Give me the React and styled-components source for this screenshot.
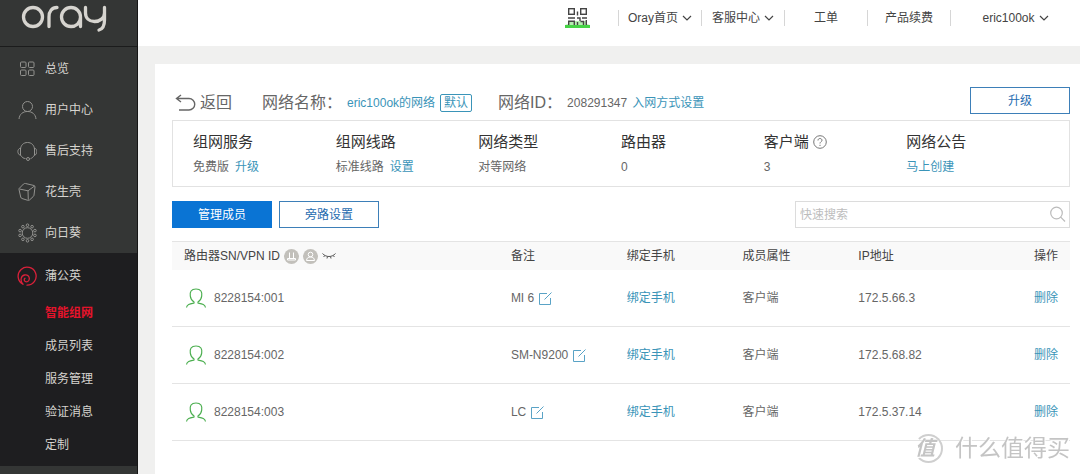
import React from "react";
import styled, { createGlobalStyle } from "styled-components";

const GlobalStyle = createGlobalStyle`
  *, *::before, *::after { box-sizing: border-box; }
  body {
    margin: 0;
    background: #f0f0ef;
    color: #666;
    font: 12px/20px "Liberation Sans", "Noto Sans CJK SC", sans-serif;
  }
  a { text-decoration: none; color: inherit; }
  ul, dl, dd, h1, h2 { margin: 0; padding: 0; list-style: none; font-weight: 400; }
  button, input { font: inherit; }
  svg { display: block; flex: none; fill: none; stroke: currentColor; }
`;

const Page = styled.div`
  display: flex;
  min-height: 100vh;
`;

const Sidebar = styled.aside`
  flex: 0 0 138px;
  background: #343635;
  border-right: 1px solid #161616;
  color: #d6d4cf;
`;

const Logo = styled.a`
  display: block;
  height: 47px;
  padding: 4px 0 0 20px;
  border-bottom: 1px solid #1b1c1c;
  margin-bottom: 1px;
`;

const NavLink = styled.a`
  display: flex;
  align-items: center;
  gap: 8px;
  height: 41px;
  padding-left: 17px;
  svg { color: ${(p) => (p.$active ? "#d9213a" : "#92928f")}; }
`;

const OpenGroup = styled.li`
  padding: 2px 0 4px;
  background: #1e1e20;
`;

const SubMenu = styled.ul`
  && { padding-top: 1px; }
`;

const SubLink = styled.a`
  display: block;
  padding-left: 45px;
  line-height: 33px;
  color: ${(p) => (p.$active ? "#e5132b" : "#d6d4cf")};
  font-weight: ${(p) => (p.$active ? 700 : 400)};
`;

const Column = styled.div`
  flex: 1;
  min-width: 0;
  display: flex;
  flex-direction: column;
`;

const TopBar = styled.header`
  display: flex;
  justify-content: flex-end;
  align-items: flex-start;
  gap: 28px;
  height: 46px;
  padding-top: 8px;
  background: #fff;
  color: #444;
`;

const TopNav = styled.nav`
  display: flex;
  padding-top: 2px;
`;

const TopLink = styled.a`
  display: flex;
  align-items: center;
  justify-content: center;
  gap: 4px;
  width: ${(p) => (p.$wide ? 130 : 83)}px;
  height: 16px;
  border-left: 1px solid #d6d6d6;
`;

const Panel = styled.main`
  flex: 1;
  margin: 18px 0 0 17px;
  padding: 23px 10px 32px 17px;
  background: #fff;
`;

const TitleRow = styled.div`
  display: flex;
  justify-content: space-between;
  align-items: center;
  margin-bottom: 6px;
`;

const TitleGroup = styled.div`
  display: flex;
  align-items: center;
  padding: 4px 0 0 3px;
  line-height: 22px;
`;

const BackLink = styled.a`
  display: flex;
  align-items: center;
  gap: 3px;
  margin-right: 30px;
  font-size: 16px;
`;

const Fact = styled.div`
  display: flex;
  align-items: center;
  gap: 5px;
  margin-right: 26px;
`;

const FactLabel = styled.h1`
  font-size: 16px;
  white-space: nowrap;
`;

const Link = styled.a`
  color: #3a94b8;
`;

const Badge = styled.span`
  padding: 0 3px;
  border: 1px solid #3a94b8;
  border-radius: 2px;
  color: #3a94b8;
  line-height: 16px;
`;

const Button = styled.button`
  width: 100px;
  height: 27px;
  padding: 0;
  border: 1px solid ${(p) => (p.$primary ? "#0a74d4" : "#3d7fb8")};
  background: ${(p) => (p.$primary ? "#0a74d4" : "#fff")};
  color: ${(p) => (p.$primary ? "#fff" : "#1f6cb0")};
`;

const InfoBox = styled.dl`
  display: grid;
  grid-template-columns: repeat(6, 1fr);
  padding: 9px 20px;
  border: 1px solid #e2e2e2;
`;

const InfoName = styled.dt`
  display: flex;
  align-items: center;
  gap: 4px;
  color: #333;
  font-size: 15px;
  line-height: 24px;
`;

const InfoValue = styled.dd`
  display: flex;
  gap: 6px;
  && { padding-top: 3px; }
`;

const Toolbar = styled.div`
  display: flex;
  align-items: center;
  gap: 7px;
  margin: 14px 0 13px;
`;

const SearchBox = styled.label`
  display: flex;
  align-items: center;
  width: 275px;
  height: 27px;
  margin-left: auto;
  padding: 0 3px 0 4px;
  border: 1px solid #dcdcdc;
  color: #bbb;
`;

const SearchInput = styled.input`
  flex: 1;
  min-width: 0;
  padding: 0;
  border: 0;
  outline: 0;
  background: none;
  color: #666;
  &::placeholder { color: #bdbdbd; opacity: 1; }
`;

const Table = styled.table`
  width: 100%;
  table-layout: fixed;
  border-collapse: separate;
  border-spacing: 0;
  border-top: 1px solid #e4e4e4;
`;

const Col = styled.col`
  width: ${(p) => p.$w};
`;

const Th = styled.th`
  height: 28px;
  padding: 0 12px;
  background: #f9f9f9;
  color: #444;
  font-weight: 400;
  text-align: ${(p) => (p.$end ? "right" : "left")};
`;

const Td = styled.td`
  height: 57px;
  padding: 0 12px;
  border-bottom: 1px solid #e4e4e4;
  text-align: ${(p) => (p.$end ? "right" : "left")};
`;

const Inline = styled.div`
  display: flex;
  align-items: center;
  gap: ${(p) => p.$gap}px;
`;

const Watermark = styled.div`
  position: fixed;
  right: 10px;
  bottom: 10px;
  display: flex;
  align-items: center;
  gap: 12px;
  color: #c4c4c4;
  font-size: 23px;
  line-height: 32px;
  text-shadow: 0 0 1px #fff, 1px 1px 0 #fff;
  pointer-events: none;
`;

const Seal = styled.span`
  width: 29px;
  height: 29px;
  border: 2px solid #cfcfcf;
  border-left-color: transparent;
  border-radius: 50%;
  font-size: 20px;
  font-style: italic;
  font-weight: 700;
  line-height: 24px;
  text-indent: -1px;
`;

const OrayLogo = () => (
  <svg width="88" height="29" viewBox="20 4 88 29" strokeWidth="3.300" strokeLinecap="round" strokeLinejoin="round">
    <circle cx="33" cy="17" r="9.500" />
    <path d="M49 26.500V17c0-6 3-9.500 8-9.500" />
    <path d="M80.500 26.500V17a9.500 9.500 0 1 0-9.500 9.500c4.500 0 9.500-3 9.500-9.500" />
    <path d="M85.500 7.500V13c0 5 3.500 8.500 9 8.500S104.500 18 104.500 13V7.500V20c0 6-1.500 9-5.500 10" />
  </svg>
);

const iconProps = { width: 20, height: 20, viewBox: "0 0 20 20", strokeWidth: 1 };

const petals = Array.from({ length: 10 }, (_, i) => {
  const a = ((i + 0.5) * Math.PI) / 5;
  return [10.5 + 7.8 * Math.cos(a), 10 + 7.8 * Math.sin(a)];
});

const icons = {
  grid: (
    <svg {...iconProps}>
      <rect x="3.500" y="3" width="5.500" height="5.500" rx="1" />
      <rect x="11.500" y="3" width="5.500" height="5.500" rx="1" />
      <rect x="3.500" y="11" width="5.500" height="5.500" rx="1" />
      <rect x="11.500" y="11" width="5.500" height="5.500" rx="1" />
    </svg>
  ),
  user: (
    <svg {...iconProps}>
      <circle cx="10.500" cy="6.500" r="5" />
      <path d="M2 19c.5-5 4-7.500 8.500-7.500S18.500 14 19 19" />
    </svg>
  ),
  headset: (
    <svg {...iconProps}>
      <path d="M3.500 8C4 4 6.500 1.500 10.500 1.500S17 4 17.500 8M3.500 7C0 8 0 13 3.500 14.500zM17.500 7c3 1 3 6 0 7.500zM4 14.500c1 2 2.500 3 4.500 3M17 14.500c-1 2-2 2.500-3.500 3.200" />
      <circle cx="11" cy="18" r="1.500" />
    </svg>
  ),
  cube: (
    <svg {...iconProps} strokeLinejoin="round">
      <path d="M8.500 1.500l8.500 2q1 .3 1 1.500l-1 8q0 1-.8 1.600L12.500 18q-.8.600-1.800.300L5 16.500q-1-.3-1.300-1.500L2 7.500Q1.800 6.500 2.600 6L6.500 2Q7.500 1.200 8.500 1.500zM2.500 7l8.500 1.800L17.500 4M11 8.800l.3 9" />
    </svg>
  ),
  sunflower: (
    <svg {...iconProps}>
      <circle cx="10.500" cy="10" r="5.300" />
      {petals.map(([x, y], i) => <circle key={i} cx={x} cy={y} r="1.300" />)}
    </svg>
  ),
  dandelion: (
    <svg {...iconProps} strokeWidth="1.300" strokeLinecap="round">
      <path d="M6 18.200A9 9 0 1 1 10 19.200M6 18.200C3 15 3.500 10 7.500 9c3-.600 5 1.500 4.800 4-.2 2.300-2.500 3.500-4.300 2.300-1-.8-1-2.300 0-3" />
    </svg>
  ),
};

const Chevron = () => (
  <svg width="10" height="8" viewBox="0 0 10 8" strokeWidth="1.200"><path d="M1 2l4 4 4-4" /></svg>
);

const QrIcon = () => (
  <svg width="25" height="20" viewBox="0 0 25 20">
    <path d="M0 17l3-1v-3h19v3l3 1v3H0z" fill="#b5ecb0" stroke="none" />
    <path d="M0 17h25v3H0z" fill="#45d245" stroke="none" />
    <g stroke="#444" strokeWidth="1.400">
      <rect x="3.700" y=".7" width="5.600" height="5.600" />
      <rect x="15.700" y=".7" width="5.600" height="5.600" />
      <path d="M12.500 3.500v4M3 10h7M12 10h3v3M17 10h5M3.700 17v-3.800h5.600V17M12.500 14v3M15.500 13.500h3V17M21.300 12v5" />
    </g>
  </svg>
);

const BackArrow = () => (
  <svg width="22" height="18" viewBox="0 0 22 18" strokeWidth="1.400">
    <path d="M6 1L1.500 4.500 6 8M1.500 4.500H14a5.500 5.500 0 0 1 0 11.500H4" />
  </svg>
);

const HelpIcon = () => (
  <svg width="14" height="14" viewBox="0 0 14 14" color="#777">
    <circle cx="7" cy="7" r="6.300" />
    <path d="M5 5.500C5 4.200 5.800 3.500 7 3.500s2 .8 2 1.800C9 6.700 7 6.700 7 8.500M7 9.800v1.200" />
  </svg>
);

const SearchIcon = () => (
  <svg width="17" height="17" viewBox="0 0 17 17" strokeWidth="1.200">
    <circle cx="7.500" cy="7" r="5.800" /><path d="M11.700 11.200L16 15.500" />
  </svg>
);

const RouterDot = () => (
  <svg width="15" height="15" viewBox="0 0 15 15" color="#fff">
    <circle cx="7.500" cy="7.500" r="7.500" fill="#c2c0bb" stroke="none" />
    <path d="M5.500 3.500V9M9.500 3.500V9M3.500 9.500h8v1.500h-8z" />
  </svg>
);

const ClientDot = () => (
  <svg width="15" height="15" viewBox="0 0 15 15" color="#fff">
    <circle cx="7.500" cy="7.500" r="7.500" fill="#c2c0bb" stroke="none" />
    <circle cx="7.500" cy="5.500" r="2.300" /><path d="M3.500 11.500c.3-2.500 1.500-3.500 4-3.500s3.700 1 4 3.500z" />
  </svg>
);

const ClosedEye = () => (
  <svg width="14" height="8" viewBox="0 0 14 8" color="#555">
    <path d="M.5 1.500C4 5.500 10 5.500 13.500 1.500M3 3.500L1.500 5M5.500 4.500L5 6.500M8.500 4.500L9 6.500M11 3.500L12.500 5" />
  </svg>
);

const MemberIcon = () => (
  <svg width="24" height="20" viewBox="-2 0 24 20" color="#4caf50" strokeWidth="1.200">
    <path d="M.5 19.500C1 16.500 3.500 16 8 15V14C5.500 12.500 4.500 10 4.300 8 3.700 4 5 1 10 1s6.300 3 5.700 7c-.2 2-1.200 4.500-3.700 6v1c4.500 1 7 1.500 7.500 4.500" />
  </svg>
);

const EditIcon = () => (
  <svg width="13" height="13" viewBox="0 0 13 13" color="#5aa3c6">
    <path d="M8 1.500H.5v11h11V6M5.500 7.500l7-7" />
  </svg>
);

const menu = [
  ["grid", "总览"],
  ["user", "用户中心"],
  ["headset", "售后支持"],
  ["cube", "花生壳"],
  ["sunflower", "向日葵"],
];
const subMenu = ["智能组网", "成员列表", "服务管理", "验证消息", "定制"];

const info = [
  { name: "组网服务", value: "免费版", link: "升级" },
  { name: "组网线路", value: "标准线路", link: "设置" },
  { name: "网络类型", value: "对等网络" },
  { name: "路由器", value: "0" },
  { name: "客户端", value: "3", help: true },
  { name: "网络公告", link: "马上创建" },
];

const members = [
  { id: "8228154:001", note: "MI 6", ip: "172.5.66.3" },
  { id: "8228154:002", note: "SM-N9200", ip: "172.5.68.82" },
  { id: "8228154:003", note: "LC", ip: "172.5.37.14" },
];

export default function App() {
  return (
    <Page>
      <GlobalStyle />
      <Sidebar>
        <Logo href="#" aria-label="oray"><OrayLogo /></Logo>
        <ul>
          {menu.map(([icon, label]) => (
            <li key={label}><NavLink href="#">{icons[icon]}{label}</NavLink></li>
          ))}
          <OpenGroup>
            <NavLink href="#" $active>{icons.dandelion}蒲公英</NavLink>
            <SubMenu>
              {subMenu.map((label, i) => (
                <li key={label}><SubLink href="#" $active={i === 0}>{label}</SubLink></li>
              ))}
            </SubMenu>
          </OpenGroup>
        </ul>
      </Sidebar>

      <Column>
        <TopBar>
          <QrIcon />
          <TopNav>
            <TopLink href="#">Oray首页<Chevron /></TopLink>
            <TopLink href="#">客服中心<Chevron /></TopLink>
            <TopLink href="#">工单</TopLink>
            <TopLink href="#">产品续费</TopLink>
            <TopLink href="#" $wide>eric100ok<Chevron /></TopLink>
          </TopNav>
        </TopBar>

        <Panel>
          <TitleRow>
            <TitleGroup>
              <BackLink href="#"><BackArrow />返回</BackLink>
              <Fact>
                <FactLabel>网络名称：</FactLabel>
                <Link href="#">eric100ok的网络</Link>
                <Badge>默认</Badge>
              </Fact>
              <Fact>
                <FactLabel>网络ID：</FactLabel>
                <span>208291347</span>
                <Link href="#">入网方式设置</Link>
              </Fact>
            </TitleGroup>
            <Button type="button">升级</Button>
          </TitleRow>

          <InfoBox>
            {info.map((item) => (
              <div key={item.name}>
                <InfoName>{item.name}{item.help && <HelpIcon />}</InfoName>
                <InfoValue>
                  {item.value && <span>{item.value}</span>}
                  {item.link && <Link href="#">{item.link}</Link>}
                </InfoValue>
              </div>
            ))}
          </InfoBox>

          <Toolbar>
            <Button type="button" $primary>管理成员</Button>
            <Button type="button">旁路设置</Button>
            <SearchBox>
              <SearchInput type="text" placeholder="快速搜索" aria-label="快速搜索" />
              <SearchIcon />
            </SearchBox>
          </Toolbar>

          <Table>
            <colgroup>
              <Col $w="36.4%" /><Col $w="12.9%" /><Col $w="12.9%" /><Col $w="12.9%" /><Col $w="14.9%" /><Col $w="10%" />
            </colgroup>
            <thead>
              <tr>
                <Th><Inline $gap={4}>路由器SN/VPN ID<RouterDot /><ClientDot /><ClosedEye /></Inline></Th>
                <Th>备注</Th>
                <Th>绑定手机</Th>
                <Th>成员属性</Th>
                <Th>IP地址</Th>
                <Th $end>操作</Th>
              </tr>
            </thead>
            <tbody>
              {members.map((m) => (
                <tr key={m.id}>
                  <Td><Inline $gap={6}><MemberIcon />{m.id}</Inline></Td>
                  <Td><Inline $gap={5}>{m.note}<EditIcon /></Inline></Td>
                  <Td><Link href="#">绑定手机</Link></Td>
                  <Td>客户端</Td>
                  <Td>{m.ip}</Td>
                  <Td $end><Link href="#">删除</Link></Td>
                </tr>
              ))}
            </tbody>
          </Table>
        </Panel>
      </Column>
      <Watermark><Seal>值</Seal>什么值得买</Watermark>
    </Page>
  );
}
